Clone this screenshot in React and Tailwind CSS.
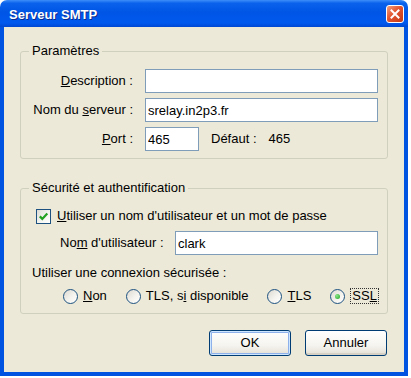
import React from 'react';

const Field = ({ value = '', className = '' }) => (
  <input
    type="text"
    readOnly
    value={value}
    className={`h-[24px] border border-[#7F9DB9] bg-white px-[2px] text-[13px] text-black outline-none ${className}`}
  />
);

const Radio = ({ checked, children }) => (
  <div className="flex items-center gap-[5px]">
    <div className="w-[15px] h-[15px] rounded-full border border-[#1C5180] bg-[linear-gradient(135deg,#DCD9D0_0%,#F4F3EE_55%,#FFFFFF_100%)] flex items-center justify-center">
      {checked && (
        <div className="w-[5px] h-[5px] rounded-full bg-[radial-gradient(circle_at_35%_35%,#8BE88B,#21A121)]" />
      )}
    </div>
    {children}
  </div>
);

const Button = ({ children, primary }) => (
  <button
    className={`w-[82px] h-[26px] rounded-[3px] border border-[#003C74] bg-[linear-gradient(to_bottom,#FFFFFF_0%,#F5F4EF_60%,#E3E0D5_100%)] text-[13px] text-black ${
      primary ? 'shadow-[inset_0_0_0_1px_#CEE7FF,inset_0_0_0_2px_#8EB1EB]' : 'shadow-[inset_0_-2px_0_#D6D0C5]'
    }`}
  >
    {children}
  </button>
);

export default function App() {
  return (
    <div className="w-[411px] h-[378px] bg-white font-['Liberation_Sans',Arial,sans-serif] text-[13px] text-black">
      <div className="w-[408px] h-[376px] flex flex-col">
        {/* barre de titre */}
        <div className="h-[27px] rounded-t-[7px] bg-[linear-gradient(to_bottom,#3D8DF8_0%,#0A62EC_12%,#0055E5_45%,#0059EE_85%,#0047D2_100%)] flex items-center pl-[9px] pr-[4px] pt-[3px]">
          <span className="font-bold text-[13px] leading-[14px] text-white [text-shadow:1px_1px_0_#0B2A8C]">
            Serveur SMTP
          </span>
          <div className="ml-auto -mt-[3px] w-[18px] h-[18px] rounded-[3px] border border-white bg-[linear-gradient(135deg,#F2A07E_0%,#E2532E_45%,#C33A15_100%)] flex items-center justify-center">
            <svg width="10" height="10" viewBox="0 0 10 10">
              <path d="M1.5 1.5 L8.5 8.5 M8.5 1.5 L1.5 8.5" stroke="#fff" strokeWidth="2" strokeLinecap="square" />
            </svg>
          </div>
        </div>

        <div className="flex-1 border-x-4 border-b-4 border-[#0052E0] bg-[#ECE9D8] px-[16px] pt-[17px] flex flex-col">
          {/* Paramètres */}
          <fieldset className="border border-[#D0D0BF] rounded-[3px] pb-[7px]">
            <legend className="ml-[8px] px-[3px] h-[14px] leading-[14px]">Paramètres</legend>
            <div className="mt-[11px] flex flex-col gap-[5px] pr-[9px]">
              <div className="flex items-center">
                <span className="w-[112px] text-right">
                  <u>D</u>escription :
                </span>
                <Field className="ml-[12px] flex-1" />
              </div>
              <div className="flex items-center">
                <span className="w-[112px] text-right">
                  Nom du <u>s</u>erveur :
                </span>
                <Field value="srelay.in2p3.fr" className="ml-[12px] flex-1" />
              </div>
              <div className="flex items-center">
                <span className="w-[112px] text-right">
                  <u>P</u>ort :
                </span>
                <Field value="465" className="ml-[12px] w-[54px]" />
                <span className="ml-[12px]">Défaut :</span>
                <span className="ml-[12px]">465</span>
              </div>
            </div>
          </fieldset>

          {/* Sécurité */}
          <fieldset className="mt-[22px] border border-[#D0D0BF] rounded-[3px] pb-[9px]">
            <legend className="ml-[8px] px-[3px] h-[14px] leading-[14px]">Sécurité et authentification</legend>
            <div className="mt-[13px] h-[16px] pl-[15px] flex items-center gap-[6px]">
              <div className="w-[15px] h-[15px] border border-[#1C5180] bg-[linear-gradient(135deg,#DCDCD7_0%,#F4F4F0_55%,#FFFFFF_100%)] flex items-center justify-center">
                <svg width="11" height="11" viewBox="0 0 11 11">
                  <path d="M1.8 5.4 L4.3 7.9 L9.3 2.6" fill="none" stroke="#21A121" strokeWidth="2.2" />
                </svg>
              </div>
              <span>
                <u>U</u>tiliser un nom d'utilisateur et un mot de passe
              </span>
            </div>
            <div className="mt-[7px] pl-[39px] pr-[9px] flex items-center">
              <span className="w-[115px]">
                No<u>m</u> d'utilisateur :
              </span>
              <Field value="clark" className="flex-1" />
            </div>
            <div className="mt-[10px] pl-[11px] leading-[15px]">Utiliser une connexion sécurisée :</div>
            <div className="mt-[8px] h-[16px] pl-[42px] flex items-center gap-[19px]">
              <Radio>
                <span>
                  <u>N</u>on
                </span>
              </Radio>
              <Radio>
                <span>
                  TLS, s<u>i</u> disponible
                </span>
              </Radio>
              <Radio>
                <span>
                  <u>T</u>LS
                </span>
              </Radio>
              <Radio checked>
                <span className="border border-dotted border-[#333] px-[1px] leading-[14px]">
                  SS<u>L</u>
                </span>
              </Radio>
            </div>
          </fieldset>

          <div className="mt-[16px] pr-[1px] flex justify-end gap-[14px]">
            <Button primary>OK</Button>
            <Button>Annuler</Button>
          </div>
        </div>
      </div>
    </div>
  );
}
